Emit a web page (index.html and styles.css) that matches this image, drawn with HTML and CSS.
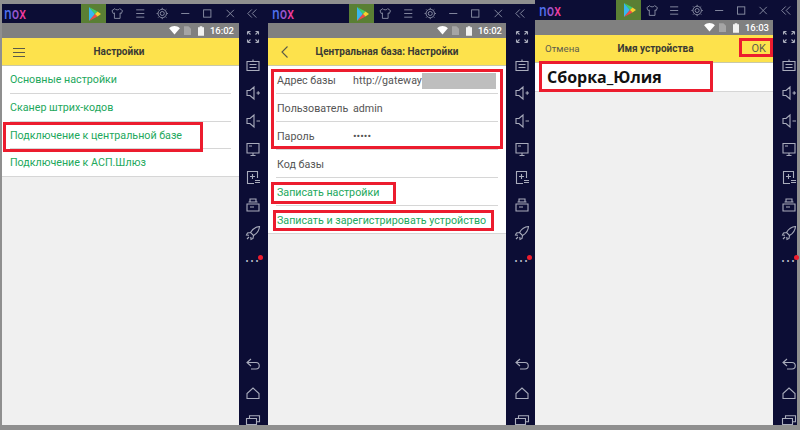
FILE: index.html
```html
<!DOCTYPE html>
<html lang="ru">
<head>
<meta charset="utf-8">
<title>Nox</title>
<link rel="stylesheet" href="styles.css">
</head>
<body>
<svg class="defs" aria-hidden="true">
  <symbol id="i-shirt" viewBox="0 0 16 16"><path d="M5 2 1.500 4.500 3 8l1.500-.7V14h7V7.300L13 8l1.500-3.500L11 2c-.5 2-5.500 2-6 0Z"/></symbol>
  <symbol id="i-menu" viewBox="0 0 16 16"><path d="M3 3.500h10M3 8h10M3 12.500h10"/></symbol>
  <symbol id="i-gear" viewBox="0 0 16 16"><circle cx="8" cy="8" r="2.500"/><circle cx="8" cy="8" r="5.200"/><path d="M8 1v1.500M8 13.500V15M1 8h1.500M13.500 8H15M3 3l1.200 1.200M11.800 11.800 13 13M3 13l1.200-1.200M11.800 4.200 13 3"/></symbol>
  <symbol id="i-min" viewBox="0 0 16 16"><path d="M3 8h10"/></symbol>
  <symbol id="i-max" viewBox="0 0 16 16"><rect x="3.500" y="3.500" width="9" height="9"/></symbol>
  <symbol id="i-close" viewBox="0 0 16 16"><path d="m3.500 3.500 9 9M12.500 3.500l-9 9"/></symbol>
  <symbol id="i-chev" viewBox="0 0 16 16"><path d="M7.500 3 2.500 8l5 5M13 3 8 8l5 5"/></symbol>
  <symbol id="i-expand" viewBox="0 0 16 16"><path d="M2.500 2.500h3M2.500 2.500v3M2.500 2.500l3 3M13.500 2.500h-3M13.500 2.500v3M13.500 2.500l-3 3M2.500 13.500h3M2.500 13.500v-3M2.500 13.500l3-3M13.500 13.500h-3M13.500 13.500v-3M13.500 13.500l-3-3"/></symbol>
  <symbol id="i-keyboard" viewBox="0 0 16 16"><path d="M2 4.500h12v9H2zM8 4.500V2.500M4.500 7.500h7M4.500 10.500h7"/></symbol>
  <symbol id="i-volp" viewBox="0 0 16 16"><path d="M2 5.500h3L9 2v12l-4-3.500H2zM11.500 8h3.500M13.200 6.300v3.400"/></symbol>
  <symbol id="i-volm" viewBox="0 0 16 16"><path d="M2 5.500h3L9 2v12l-4-3.500H2zM11.500 8h3.500"/></symbol>
  <symbol id="i-screen" viewBox="0 0 16 16"><path d="M2 2.500h12v9.500H2zM5.500 14.500h5M8 12v2.500M4 5h3"/></symbol>
  <symbol id="i-apk" viewBox="0 0 16 16"><path d="M9 14.500H2.500v-12h10V9M7.500 5v5M5 7.500h5M10 11.500h5M10 13.500h5"/></symbol>
  <symbol id="i-stack" viewBox="0 0 16 16"><path d="M5 2h6v3H5zM2 7h12v7H2zM3.500 5h9M5 10h4"/></symbol>
  <symbol id="i-rocket" viewBox="0 0 16 16"><path d="M14.500 1.500c-4 .3-7 2.500-9 6l3 3c3.500-2 5.700-5 6-9ZM5.500 7.500l-3 .5-1 2 2.500.2M8.500 10.500l-.5 3-2 1-.2-2.500M4 12l-2 2"/></symbol>
  <symbol id="i-back" viewBox="0 0 16 16"><path d="M6 3 2 6.500 6 10M2 6.500h9a3 3 0 0 1 0 6.500H6"/></symbol>
  <symbol id="i-home" viewBox="0 0 16 16"><path d="M2 13.500V8.500L8 3l6 5.500v5z"/></symbol>
  <symbol id="i-recent" viewBox="0 0 16 10"><path d="M1.500 3.500h10v6h-10zM4.500 3.500V.800h10v6h-3"/></symbol>
  <symbol id="i-wifi" viewBox="0 0 12 10"><path d="M0 2.500C3.500-.8 8.500-.8 12 2.500L6 9.500z"/></symbol>
  <symbol id="i-sim" viewBox="0 0 8 10"><path d="M0 0h5l3 3v7H0z"/></symbol>
  <symbol id="i-batt" viewBox="0 0 7 11"><path d="M2 0h3v1h2v10H0V1h2z"/></symbol>
</svg>

<main class="desktop">

  <section class="window window-a">
    <header class="titlebar">
      <span class="logo-slot"><span class="logo"><span class="logo-n">n</span><span class="logo-o">o</span><span class="logo-x">x</span></span></span>
      <span class="play"><svg width="14" height="14" viewBox="0 0 14 14"><path fill="#38b6f0" d="M2 0v14l6-7z"/><path fill="#3fce6a" d="M2 0l6 7 2.500-2.500z"/><path fill="#f04a4a" d="M2 14l6-7 2.500 2.500z"/><path fill="#f8d030" d="M10.500 4.500 8 7l2.500 2.500L14 7z"/></svg></span>
      <svg class="tb-icon"><use href="#i-shirt"/></svg>
      <svg class="tb-icon"><use href="#i-menu"/></svg>
      <svg class="tb-icon"><use href="#i-gear"/></svg>
      <svg class="tb-icon"><use href="#i-min"/></svg>
      <svg class="tb-icon"><use href="#i-max"/></svg>
      <svg class="tb-icon"><use href="#i-close"/></svg>
      <svg class="tb-icon"><use href="#i-chev"/></svg>
    </header>
    <div class="body">
      <div class="screen">
        <div class="status">
          <svg class="st-wifi"><use href="#i-wifi"/></svg>
          <svg class="st-sim"><use href="#i-sim"/></svg>
          <svg class="st-batt"><use href="#i-batt"/></svg>
          <span class="time">16:02</span>
        </div>
        <div class="appbar">
          <span class="bar-left"><svg class="burger" viewBox="0 0 12 10"><path d="M0 1.500h12M0 5.500h12M0 9.500h12"/></svg></span>
          <h1 class="bar-title">Настройки</h1>
          <span class="bar-right"></span>
        </div>
        <ul class="list">
          <li class="row row-narrow link">Основные настройки</li>
          <li class="row row-narrow link">Сканер штрих-кодов</li>
          <li class="row row-narrow link">Подключение к центральной базе</li>
          <li class="row row-narrow row-last link">Подключение к АСП.Шлюз</li>
        </ul>
        <div class="mark mark-a1"></div>
      </div>
      <aside class="rail">
        <svg class="rail-icon"><use href="#i-expand"/></svg>
        <svg class="rail-icon"><use href="#i-keyboard"/></svg>
        <svg class="rail-icon"><use href="#i-volp"/></svg>
        <svg class="rail-icon"><use href="#i-volm"/></svg>
        <svg class="rail-icon"><use href="#i-screen"/></svg>
        <svg class="rail-icon"><use href="#i-apk"/></svg>
        <svg class="rail-icon"><use href="#i-stack"/></svg>
        <svg class="rail-icon"><use href="#i-rocket"/></svg>
        <span class="more">•••<i class="dot"></i></span>
        <div class="rail-nav">
          <svg class="nav-icon"><use href="#i-back"/></svg>
          <svg class="nav-icon"><use href="#i-home"/></svg>
          <svg class="nav-recent"><use href="#i-recent"/></svg>
        </div>
      </aside>
    </div>
  </section>

  <section class="window window-b">
    <header class="titlebar">
      <span class="logo-slot"><span class="logo"><span class="logo-n">n</span><span class="logo-o">o</span><span class="logo-x">x</span></span></span>
      <span class="play"><svg width="14" height="14" viewBox="0 0 14 14"><path fill="#38b6f0" d="M2 0v14l6-7z"/><path fill="#3fce6a" d="M2 0l6 7 2.500-2.500z"/><path fill="#f04a4a" d="M2 14l6-7 2.500 2.500z"/><path fill="#f8d030" d="M10.500 4.500 8 7l2.500 2.500L14 7z"/></svg></span>
      <svg class="tb-icon"><use href="#i-shirt"/></svg>
      <svg class="tb-icon"><use href="#i-menu"/></svg>
      <svg class="tb-icon"><use href="#i-gear"/></svg>
      <svg class="tb-icon"><use href="#i-min"/></svg>
      <svg class="tb-icon"><use href="#i-max"/></svg>
      <svg class="tb-icon"><use href="#i-close"/></svg>
      <svg class="tb-icon"><use href="#i-chev"/></svg>
    </header>
    <div class="body">
      <div class="screen">
        <div class="status">
          <svg class="st-wifi"><use href="#i-wifi"/></svg>
          <svg class="st-sim"><use href="#i-sim"/></svg>
          <svg class="st-batt"><use href="#i-batt"/></svg>
          <span class="time">16:02</span>
        </div>
        <div class="appbar">
          <span class="bar-left"><svg class="chevron" viewBox="0 0 7 12"><path d="M6.500.500 1 6l5.500 5.500"/></svg></span>
          <h1 class="bar-title">Центральная база: Настройки</h1>
          <span class="bar-right"></span>
        </div>
        <ul class="list">
          <li class="row field"><span class="label">Адрес базы</span><span class="value">http://gateway</span><span class="redact"></span></li>
          <li class="row field"><span class="label">Пользователь</span><span class="value">admin</span></li>
          <li class="row field"><span class="label">Пароль</span><span class="value">•••••</span></li>
          <li class="row field"><span class="label">Код базы</span></li>
          <li class="row field link">Записать настройки</li>
          <li class="row field row-last link">Записать и зарегистрировать устройство</li>
        </ul>
        <div class="mark mark-b1"></div>
        <div class="mark mark-b2"></div>
        <div class="mark mark-b3"></div>
      </div>
      <aside class="rail">
        <svg class="rail-icon"><use href="#i-expand"/></svg>
        <svg class="rail-icon"><use href="#i-keyboard"/></svg>
        <svg class="rail-icon"><use href="#i-volp"/></svg>
        <svg class="rail-icon"><use href="#i-volm"/></svg>
        <svg class="rail-icon"><use href="#i-screen"/></svg>
        <svg class="rail-icon"><use href="#i-apk"/></svg>
        <svg class="rail-icon"><use href="#i-stack"/></svg>
        <svg class="rail-icon"><use href="#i-rocket"/></svg>
        <span class="more">•••<i class="dot"></i></span>
        <div class="rail-nav">
          <svg class="nav-icon"><use href="#i-back"/></svg>
          <svg class="nav-icon"><use href="#i-home"/></svg>
          <svg class="nav-recent"><use href="#i-recent"/></svg>
        </div>
      </aside>
    </div>
  </section>

  <section class="window window-c">
    <header class="titlebar">
      <span class="logo-slot"><span class="logo"><span class="logo-n">n</span><span class="logo-o">o</span><span class="logo-x">x</span></span></span>
      <span class="play"><svg width="14" height="14" viewBox="0 0 14 14"><path fill="#38b6f0" d="M2 0v14l6-7z"/><path fill="#3fce6a" d="M2 0l6 7 2.500-2.500z"/><path fill="#f04a4a" d="M2 14l6-7 2.500 2.500z"/><path fill="#f8d030" d="M10.500 4.500 8 7l2.500 2.500L14 7z"/></svg></span>
      <svg class="tb-icon"><use href="#i-shirt"/></svg>
      <svg class="tb-icon"><use href="#i-menu"/></svg>
      <svg class="tb-icon"><use href="#i-gear"/></svg>
      <svg class="tb-icon"><use href="#i-min"/></svg>
      <svg class="tb-icon"><use href="#i-max"/></svg>
      <svg class="tb-icon"><use href="#i-close"/></svg>
      <svg class="tb-icon"><use href="#i-chev"/></svg>
    </header>
    <div class="body">
      <div class="screen">
        <div class="status">
          <svg class="st-wifi"><use href="#i-wifi"/></svg>
          <svg class="st-sim"><use href="#i-sim"/></svg>
          <svg class="st-batt"><use href="#i-batt"/></svg>
          <span class="time">16:03</span>
        </div>
        <div class="appbar appbar-dialog">
          <span class="bar-action">Отмена</span>
          <h1 class="bar-title">Имя устройства</h1>
          <span class="bar-action bar-ok">OK</span>
        </div>
        <div class="input-row">Сборка_Юлия</div>
        <div class="mark mark-c1"></div>
        <div class="mark mark-c2"></div>
      </div>
      <aside class="rail">
        <svg class="rail-icon"><use href="#i-expand"/></svg>
        <svg class="rail-icon"><use href="#i-keyboard"/></svg>
        <svg class="rail-icon"><use href="#i-volp"/></svg>
        <svg class="rail-icon"><use href="#i-volm"/></svg>
        <svg class="rail-icon"><use href="#i-screen"/></svg>
        <svg class="rail-icon"><use href="#i-apk"/></svg>
        <svg class="rail-icon"><use href="#i-stack"/></svg>
        <svg class="rail-icon"><use href="#i-rocket"/></svg>
        <span class="more">•••<i class="dot"></i></span>
        <div class="rail-nav">
          <svg class="nav-icon"><use href="#i-back"/></svg>
          <svg class="nav-icon"><use href="#i-home"/></svg>
          <svg class="nav-recent"><use href="#i-recent"/></svg>
        </div>
      </aside>
    </div>
  </section>

</main>
</body>
</html>
```
FILE: styles.css
```css
* { box-sizing: border-box; }

html, body {
  margin: 0;
  height: 100%;
  overflow: hidden;
  background: #8f8f8f;
}

.defs { display: none; }

.desktop {
  display: flex;
  height: 425px;
  padding-left: 2px;
  font-family: Roboto, "Liberation Sans", sans-serif;
}

.window {
  display: flex;
  flex-direction: column;
  background: #0c0d35;
}

.window-a { width: 266px; margin-top: 4px; }
.window-b { width: 267px; margin-top: 4px; }
.window-c { width: 262px; }

.titlebar {
  display: flex;
  align-items: center;
  flex: none;
  height: 19px;
  padding-left: 4px;
}
.window-a .titlebar { padding-left: 2px; }
.window-c .titlebar { height: 20px; }

.logo-slot {
  flex: none;
  width: 77px;
}

.logo {
  display: inline-block;
  font-family: "Open Sans", sans-serif;
  font-size: 16px;
  font-weight: 600;
  line-height: 17px;
  transform: scaleX(0.76);
  transform-origin: left center;
}
.logo-n { color: #4f72ee; }
.logo-o { color: #9a58d0; }
.logo-x { color: #f03ca0; }

.play {
  display: flex;
  align-items: center;
  justify-content: center;
  flex: none;
  width: 25px;
  height: 100%;
  background: #5a7f34;
}

.tb-icon {
  width: 22.5px;
  height: 13px;
  fill: none;
  stroke: #8f93a8;
  stroke-width: 1.1;
}

.body {
  display: flex;
  flex: 1;
  min-height: 0;
}

.screen {
  position: relative;
  display: flex;
  flex-direction: column;
  flex: none;
  width: 238px;
  background: #f0f0f0;
}
.window-a .screen { width: 237px; }

.status {
  display: flex;
  align-items: center;
  justify-content: flex-end;
  flex: none;
  height: 15px;
  padding-right: 4px;
  background: #808080;
}
.window-a .status { padding-right: 5px; }

.st-wifi { width: 11px; height: 9px; fill: #fff; margin-right: 4px; }
.st-sim { width: 7px; height: 9px; fill: #a5a5a5; margin-right: 7px; }
.st-batt { width: 6px; height: 10px; fill: #f2f2f2; margin-right: 6px; }

.time {
  font-size: 9.5px;
  font-weight: 500;
  line-height: 15px;
  color: #fff;
}

.appbar {
  display: flex;
  align-items: center;
  flex: none;
  height: 28px;
  background: #fde24c;
  border-bottom: 1px solid #c9c9a8;
}
.window-a .appbar { padding-right: 3px; }

.bar-left, .bar-right {
  display: flex;
  align-items: center;
  flex: none;
  width: 40px;
}
.bar-left { padding-left: 11px; }

.bar-title {
  flex: 1;
  margin: 0;
  font-size: 10px;
  font-weight: 700;
  text-align: center;
  color: #3a3a34;
}

.burger {
  width: 12px;
  height: 10px;
  fill: none;
  stroke: #5a5a48;
  stroke-width: 1;
}

.chevron {
  width: 7px;
  height: 12px;
  margin-left: 2px;
  fill: none;
  stroke: #5a5a48;
  stroke-width: 1.1;
}

.appbar-dialog { padding: 0 7px 0 10px; }

.bar-action {
  flex: none;
  width: 50px;
  font-size: 9.7px;
  color: #5d5d4c;
}
.bar-ok {
  font-size: 11px;
  text-align: right;
}

.list {
  margin: 0;
  padding: 0;
  list-style: none;
  background: #fff;
}

.row {
  position: relative;
  height: 27.8px;
  margin: 0;
  padding-left: 8px;
  font-size: 10.7px;
  line-height: 28px;
}
.row::after {
  content: "";
  position: absolute;
  left: 8px;
  right: 8px;
  bottom: 0;
  height: 1px;
  background: #d6d6d6;
}
.row-last::after { left: 0; right: 0; }

.link { color: #22a85c; }

.field {
  display: flex;
  align-items: center;
  height: 28px;
  padding-left: 9px;
  padding-top: 1px;
  color: #555;
}
.field.link { color: #22a85c; }
.label { flex: none; width: 76px; }
.value { flex: none; color: #555; }
.redact {
  flex: none;
  width: 74px;
  height: 16px;
  background: #bebebe;
}

.input-row {
  flex: none;
  height: 29px;
  padding-left: 12px;
  background: #fff;
  border-bottom: 1px solid #d6d6d6;
  font-family: "Open Sans", sans-serif;
  font-size: 16px;
  font-weight: 700;
  line-height: 28px;
  color: #111;
}

.mark {
  position: absolute;
  border: 3px solid #ec1c2e;
}
.mark-a1 { left: 1px; top: 99px; width: 200px; height: 30px; }
.mark-b1 { left: 3px; top: 46px; width: 232px; height: 80px; }
.mark-b2 { left: 3px; top: 159px; width: 125px; height: 22px; }
.mark-b3 { left: 5px; top: 187px; width: 221px; height: 21px; }
.mark-c1 { left: 4px; top: 41px; width: 174px; height: 31px; }
.mark-c2 { left: 204px; top: 18px; width: 34px; height: 19px; }

.rail {
  display: flex;
  flex-direction: column;
  align-items: center;
  flex: 1;
  min-width: 0;
}
.window-a .rail { padding-right: 1px; }
.window-b .rail { padding-left: 3px; }
.window-c .rail { padding-left: 8px; padding-top: 3px; }

.rail-icon {
  flex: none;
  width: 16px;
  height: 16px;
  margin: 6px 0;
  fill: none;
  stroke: #a9acbc;
  stroke-width: 1.1;
}

.more {
  position: relative;
  flex: none;
  height: 28px;
  font-size: 9px;
  line-height: 28px;
  letter-spacing: 2px;
  color: #c4c6d2;
}
.dot {
  position: absolute;
  top: 8px;
  right: -2px;
  width: 5px;
  height: 5px;
  border-radius: 50%;
  background: #ee1c2e;
}

.rail-nav {
  display: flex;
  flex-direction: column;
  align-items: center;
  gap: 13px;
  margin-top: auto;
}

.nav-icon {
  width: 16px;
  height: 16px;
  fill: none;
  stroke: #a9acbc;
  stroke-width: 1.1;
}
.nav-recent {
  width: 16px;
  height: 10px;
  margin-top: 1px;
  fill: none;
  stroke: #a9acbc;
  stroke-width: 1.1;
}
```
